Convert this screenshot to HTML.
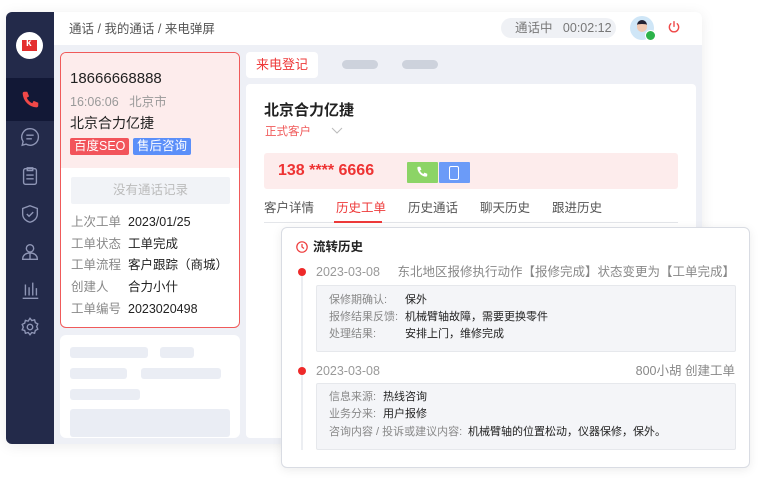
<!DOCTYPE html>
<html><head><meta charset="utf-8"><style>
*{margin:0;padding:0;box-sizing:border-box}
body{width:758px;height:478px;background:#fff;font-family:"Liberation Sans","Noto Sans CJK SC",sans-serif;position:relative;overflow:hidden;color:#222}
.a{position:absolute}
.win{left:6px;top:12px;width:696px;height:432px;background:#eef0f6;border-radius:6px;overflow:hidden;box-shadow:0 2px 14px rgba(0,0,0,.08)}
.side{left:0;top:0;width:48px;height:432px;background:#232a4a}
.hdr{left:48px;top:0;width:648px;height:33px;background:#fff}
.ic{left:13px;width:22px;height:22px}
.row{position:absolute;left:10px;height:18px;line-height:18px;font-size:12.5px;white-space:nowrap}
.row .k{position:absolute;left:0;color:#888}
.row .v{position:absolute;left:57px;color:#222}
.sk{background:#eaedf4;border-radius:3px;position:absolute}
.ln{position:absolute;height:17px;line-height:17px;font-size:11px;white-space:nowrap}
</style></head><body>
<div class="a win">
 <div class="a side">
  <div class="a" style="left:10px;top:20px;width:27px;height:27px;border-radius:50%;background:#fff"></div>
  <div class="a" style="left:16px;top:28px;width:15px;height:11px;background:#e42d2d"></div>
  <div class="a" style="left:20px;top:26px;color:#fff;font-size:10px;font-weight:bold">k</div>
  <div class="a" style="left:0;top:66px;width:48px;height:43px;background:#121836"></div>
  <svg class="a ic" style="top:77px" viewBox="0 0 24 24"><path d="M6 3l3 0 2 5-2.5 1.5a11 11 0 0 0 6 6L16 13l5 2v3a2 2 0 0 1-2 2A16 16 0 0 1 4 5a2 2 0 0 1 2-2z" fill="#f04848"/></svg>
  <svg class="a ic" style="top:114px" viewBox="0 0 24 24" fill="none" stroke="#8f96b6" stroke-width="1.5"><path d="M12 3a9 9 0 0 0-7.5 14L3.5 21l4.2-1.2A9 9 0 1 0 12 3z"/><path d="M8 10h8M8 14h6"/></svg>
  <svg class="a ic" style="top:153px" viewBox="0 0 24 24" fill="none" stroke="#8f96b6" stroke-width="1.5"><rect x="5" y="4" width="14" height="17" rx="2"/><path d="M9 3h6v3H9zM8 11h8M8 15h8"/></svg>
  <svg class="a ic" style="top:191px" viewBox="0 0 24 24" fill="none" stroke="#8f96b6" stroke-width="1.5"><path d="M12 3l8 3v6c0 5-4 8-8 9-4-1-8-4-8-9V6z"/><path d="M8.5 12l2.5 2.5 4.5-4.5"/></svg>
  <svg class="a ic" style="top:229px" viewBox="0 0 24 24" fill="none" stroke="#8f96b6" stroke-width="1.5"><circle cx="12" cy="8" r="4"/><path d="M4 20c0-5 4-7 8-7s8 2 8 7zM12 13v7"/></svg>
  <svg class="a ic" style="top:267px" viewBox="0 0 24 24" fill="none" stroke="#8f96b6" stroke-width="1.5"><path d="M7 6v12M11 9v9M15 4v14M19 10v8M4 21h17"/></svg>
  <svg class="a ic" style="top:304px" viewBox="0 0 24 24" fill="none" stroke="#8f96b6" stroke-width="1.5"><circle cx="12" cy="12" r="3"/><path d="M12 2.5l2 2.5 3-.8.8 3 2.7 1.4-1.2 2.9 1.2 2.9-2.7 1.4-.8 3-3-.8-2 2.5-2-2.5-3 .8-.8-3L3.5 15l1.2-2.9L3.5 9.2l2.7-1.4.8-3 3 .8z"/></svg>
 </div>
 <div class="a hdr">
  <div class="a" style="left:15px;top:8px;font-size:12.5px;color:#555;line-height:18px">通话 / 我的通话 / 来电弹屏</div>
  <div class="a" style="left:447px;top:6px;width:115px;height:20px;border-radius:10px;background:#eff1f5;color:#777;font-size:12.5px;line-height:20px;padding-left:14px">通话中&nbsp;&nbsp;&nbsp;00:02:12</div>
  <div class="a" style="left:576px;top:4px;width:24px;height:24px;border-radius:50%;background:#cfe6f7"></div>
  <div class="a" style="left:583px;top:8px;width:10px;height:12px;border-radius:5px;background:#f1c9b2;border-top:4px solid #223"></div>
  <div class="a" style="left:591px;top:18px;width:11px;height:11px;border-radius:50%;background:#2cb34a;border:1.5px solid #fff"></div>
  <svg class="a" style="left:613px;top:8px" width="14" height="14" viewBox="0 0 24 24" fill="none" stroke="#ef4a4a" stroke-width="2.4" stroke-linecap="round"><path d="M12 3v8M6.5 6.5a8 8 0 1 0 11 0"/></svg>
 </div>
 <div class="a" style="left:54px;top:40px;width:180px;height:276px;background:#fff;border:1.3px solid #f05a5a;border-radius:6px;overflow:hidden">
  <div class="a" style="left:0;top:0;width:180px;height:115px;background:#fdecec"></div>
  <div class="a" style="left:9px;top:16px;font-size:15px;line-height:20px">18666668888</div>
  <div class="a" style="left:9px;top:40px;font-size:12.5px;color:#999;line-height:18px">16:06:06&nbsp;&nbsp;&nbsp;北京市</div>
  <div class="a" style="left:9px;top:60px;font-size:14px;line-height:20px">北京合力亿捷</div>
  <div class="a" style="left:9px;top:85px;background:#f2545b;color:#fff;font-size:12.5px;padding:0 4px;height:17px;line-height:17px;border-radius:2px">百度SEO</div>
  <div class="a" style="left:72px;top:85px;background:#5b8ff9;color:#fff;font-size:12.5px;padding:0 4px;height:17px;line-height:17px;border-radius:2px">售后咨询</div>
  <div class="a" style="left:10px;top:124px;width:159px;height:27px;background:#f1f3f7;border-radius:2px;text-align:center;line-height:27px;color:#bbb;font-size:12.5px">没有通话记录</div>
  <div class="row" style="top:160px"><span class="k">上次工单</span><span class="v">2023/01/25</span></div>
  <div class="row" style="top:182px"><span class="k">工单状态</span><span class="v">工单完成</span></div>
  <div class="row" style="top:203px"><span class="k">工单流程</span><span class="v">客户跟踪（商城）</span></div>
  <div class="row" style="top:225px"><span class="k">创建人</span><span class="v">合力小什</span></div>
  <div class="row" style="top:247px"><span class="k">工单编号</span><span class="v">2023020498</span></div>
 </div>
 <div class="a" style="left:54px;top:323px;width:180px;height:103px;background:#fff;border-radius:6px">
  <div class="sk" style="left:10px;top:12px;width:78px;height:11px"></div>
  <div class="sk" style="left:100px;top:12px;width:34px;height:11px"></div>
  <div class="sk" style="left:10px;top:33px;width:57px;height:11px"></div>
  <div class="sk" style="left:81px;top:33px;width:80px;height:11px"></div>
  <div class="sk" style="left:10px;top:54px;width:70px;height:11px"></div>
  <div class="sk" style="left:10px;top:74px;width:160px;height:28px"></div>
 </div>
 <div class="a" style="left:240px;top:40px;width:72px;height:26px;background:#fff;border-radius:4px;color:#ee3a3a;font-size:13px;line-height:26px;text-align:center">来电登记</div>
 <div class="a" style="left:336px;top:48px;width:36px;height:9px;border-radius:5px;background:#cdd2dc"></div>
 <div class="a" style="left:396px;top:48px;width:36px;height:9px;border-radius:5px;background:#cdd2dc"></div>
 <div class="a" style="left:240px;top:72px;width:450px;height:354px;background:#fff;border-radius:4px">
  <div class="a" style="left:18px;top:17px;font-size:15px;font-weight:bold;color:#222;line-height:20px">北京合力亿捷</div>
  <div class="a" style="left:19px;top:40px;font-size:11.5px;color:#f05a5a;line-height:16px">正式客户</div>
  <svg class="a" style="left:85px;top:43px" width="12" height="8" viewBox="0 0 12 8" fill="none" stroke="#bbb"><path d="M1 1l5 5 5-5"/></svg>
  <div class="a" style="left:18px;top:69px;width:414px;height:36px;background:#fdecec;border-radius:3px"></div>
  <div class="a" style="left:32px;top:77px;font-size:16px;font-weight:bold;color:#ee3333;line-height:20px">138 **** 6666</div>
  <div class="a" style="left:161px;top:78px;width:31px;height:21px;background:#8cd466;border-radius:1px"></div>
  <svg class="a" style="left:169px;top:81px" width="14" height="14" viewBox="0 0 24 24"><path d="M6 3l3 0 2 5-2.5 1.5a11 11 0 0 0 6 6L16 13l5 2v3a2 2 0 0 1-2 2A16 16 0 0 1 4 5a2 2 0 0 1 2-2z" fill="#fff"/></svg>
  <div class="a" style="left:193px;top:78px;width:31px;height:21px;background:#6b9bf8;border-radius:1px"></div>
  <div class="a" style="left:203px;top:82px;width:10px;height:14px;border:1.5px solid #fff;border-radius:2px"></div>
  <div class="a" style="left:18px;top:115px;font-size:12.5px;color:#555;line-height:18px">客户详情</div>
  <div class="a" style="left:90px;top:115px;font-size:12.5px;color:#ee3a3a;line-height:18px">历史工单</div>
  <div class="a" style="left:162px;top:115px;font-size:12.5px;color:#555;line-height:18px">历史通话</div>
  <div class="a" style="left:234px;top:115px;font-size:12.5px;color:#555;line-height:18px">聊天历史</div>
  <div class="a" style="left:306px;top:115px;font-size:12.5px;color:#555;line-height:18px">跟进历史</div>
  <div class="a" style="left:18px;top:138px;width:414px;height:1px;background:#e4e6ea"></div>
  <div class="a" style="left:88px;top:137px;width:48px;height:2px;background:#ee3a3a"></div>
 </div>
</div>
<div class="a" style="left:281px;top:227px;width:469px;height:241px;background:#fff;border:1px solid #d9dce3;border-radius:6px;box-shadow:0 2px 10px rgba(0,0,0,.08)">
 <svg class="a" style="left:14px;top:13px" width="12" height="12" viewBox="0 0 12 12" fill="none" stroke="#ee3a3a" stroke-width="1.2"><circle cx="6" cy="6" r="5.2"/><path d="M6 3v3l2 1.5"/></svg>
 <div class="a" style="left:31px;top:10px;font-size:12.5px;font-weight:bold;color:#222;line-height:18px">流转历史</div>
 <div class="a" style="left:19px;top:44px;width:2px;height:178px;background:#eceef2"></div>
 <div class="a" style="left:16px;top:40px;width:8px;height:8px;border-radius:50%;background:#ee2a2a"></div>
 <div class="a" style="left:16px;top:139px;width:8px;height:8px;border-radius:50%;background:#ee2a2a"></div>
 <div class="a" style="left:34px;top:35px;font-size:12.5px;color:#999;line-height:18px">2023-03-08</div>
 <div class="a" style="right:14px;top:35px;font-size:12.5px;color:#888;line-height:18px">东北地区报修执行动作【报修完成】状态变更为【工单完成】</div>
 <div class="a" style="left:34px;top:57px;width:420px;height:67px;background:#f4f5f8;border:1px solid #e6e8ec;border-radius:2px">
  <div class="ln" style="left:12px;top:6px;color:#888">保修期确认:</div><div class="ln" style="left:88px;top:6px">保外</div>
  <div class="ln" style="left:12px;top:23px;color:#888">报修结果反馈:</div><div class="ln" style="left:88px;top:23px">机械臂轴故障，需要更换零件</div>
  <div class="ln" style="left:12px;top:40px;color:#888">处理结果:</div><div class="ln" style="left:88px;top:40px">安排上门，维修完成</div>
 </div>
 <div class="a" style="left:34px;top:134px;font-size:12.5px;color:#999;line-height:18px">2023-03-08</div>
 <div class="a" style="right:14px;top:134px;font-size:12.5px;color:#888;line-height:18px">800小胡 创建工单</div>
 <div class="a" style="left:34px;top:155px;width:420px;height:67px;background:#f4f5f8;border:1px solid #e6e8ec;border-radius:2px">
  <div class="ln" style="left:12px;top:5px;color:#888">信息来源:</div><div class="ln" style="left:66px;top:5px">热线咨询</div>
  <div class="ln" style="left:12px;top:22px;color:#888">业务分来:</div><div class="ln" style="left:66px;top:22px">用户报修</div>
  <div class="ln" style="left:12px;top:40px;color:#888">咨询内容 / 投诉或建议内容:</div><div class="ln" style="left:151px;top:40px">机械臂轴的位置松动，仪器保修，保外。</div>
 </div>
</div>
</body></html>
